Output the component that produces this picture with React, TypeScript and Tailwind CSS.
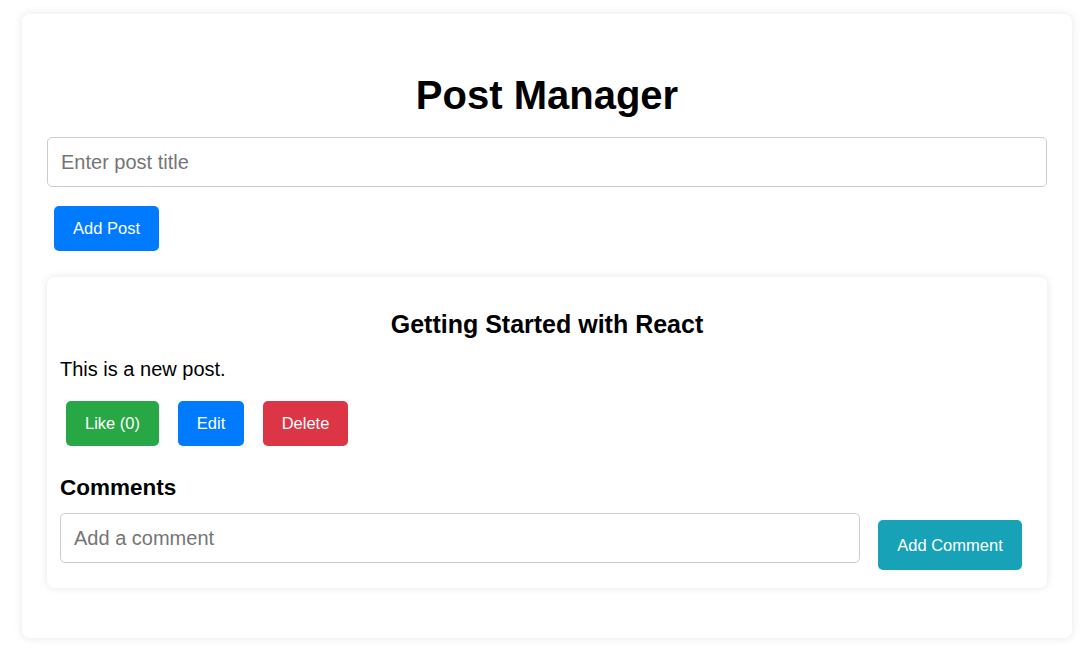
import { useState } from 'react';

export default function App() {
    const [title, setTitle] = useState('');
    const [comment, setComment] = useState('');
    const [likes, setLikes] = useState(0);

    return (
        <div className="min-h-screen bg-white pt-[14px] font-['Liberation_Sans',Arial,sans-serif] text-black">
            <div className="ml-[22px] w-[1050px] rounded-[8px] bg-white px-[25px] pt-[58px] pb-[50px] shadow-[0_0_10px_rgba(0,0,0,0.1)]">
                <h1 className="mb-[19px] text-center text-[40px] font-bold leading-[46px]">Post Manager</h1>
                <input
                    value={title}
                    onChange={(e) => setTitle(e.target.value)}
                    placeholder="Enter post title"
                    className="block h-[50px] w-full rounded-[5px] border border-[#ccc] px-[13px] text-[20px] outline-none placeholder:text-[#757575]"
                />
                <button className="ml-[7px] mt-[19px] h-[45px] w-[105px] rounded-[5px] bg-[#007bff] text-[16.5px] text-white">
                    Add Post
                </button>

                {/* Post card */}
                <div className="mt-[26px] rounded-[8px] bg-white px-[13px] pt-[33px] pb-[18px] shadow-[0_0_8px_rgba(0,0,0,0.1)]">
                    <h2 className="text-center text-[25px] font-bold leading-[28px]">Getting Started with React</h2>
                    <p className="mt-[20px] text-[20px] leading-[23px]">This is a new post.</p>
                    <div className="ml-[6px] mt-[20px] flex gap-[19px]">
                        <button
                            onClick={() => setLikes(likes + 1)}
                            className="h-[45px] w-[93px] rounded-[5px] bg-[#28a745] text-[16.5px] text-white"
                        >
                            Like ({likes})
                        </button>
                        <button className="h-[45px] w-[66px] rounded-[5px] bg-[#007bff] text-[16.5px] text-white">Edit</button>
                        <button className="h-[45px] w-[85px] rounded-[5px] bg-[#dc3545] text-[16.5px] text-white">Delete</button>
                    </div>

                    <h3 className="mt-[28px] text-[22.5px] font-bold leading-[27px]">Comments</h3>
                    <div className="mt-[12px] flex items-start gap-[18px]">
                        <input
                            value={comment}
                            onChange={(e) => setComment(e.target.value)}
                            placeholder="Add a comment"
                            className="block h-[50px] w-[800px] rounded-[5px] border border-[#ccc] px-[13px] text-[20px] outline-none placeholder:text-[#757575]"
                        />
                        <button className="mt-[7px] h-[50px] w-[144px] rounded-[5px] bg-[#17a2b8] text-[16.5px] text-white">
                            Add Comment
                        </button>
                    </div>
                </div>
            </div>
        </div>
    );
}
